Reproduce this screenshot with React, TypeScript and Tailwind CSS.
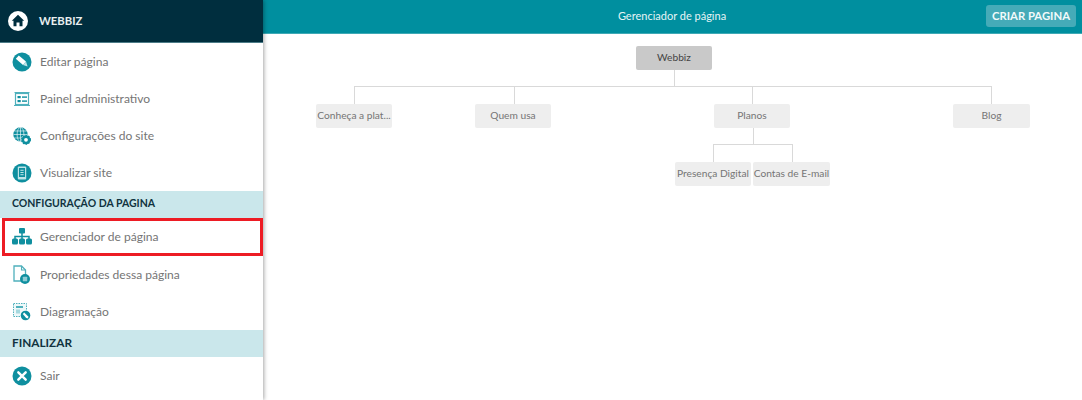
const font = { fontFamily: '"Lato", "Noto Sans", sans-serif' };

const T = "#0f8f9f";

function Home() {
  return (
    <svg width="20" height="20" viewBox="0 0 20 20">
      <circle cx="10" cy="10" r="10" fill="#fff" />
      <path d="M10 3.8 L16.2 9.8 L14.5 9.8 L14.5 15.2 L11.5 15.2 L11.5 11.5 L8.5 11.5 L8.5 15.2 L5.5 15.2 L5.5 9.8 L3.8 9.8 Z" fill="#002e3e" />
    </svg>
  );
}
function Edit() {
  return (
    <svg width="20" height="20" viewBox="0 0 20 20">
      <circle cx="10" cy="10" r="9.5" fill={T} />
      <path d="M3.8 6.8 L6.8 3.6 L14 9.6 L11 13 Z" fill="#fff" />
      <path d="M11 13 L14 9.6 L15.6 14.6 Z" fill="#bfe4e8" />
    </svg>
  );
}
function Panel() {
  return (
    <svg width="16" height="14" viewBox="0 0 16 14">
      <path d="M0.5 0.5H15.5" stroke="#4fb0bc" strokeWidth="1" />
      <rect x="1.5" y="1.5" width="13" height="11" fill="#fff" stroke="#4fb0bc" strokeWidth="1.2" />
      <rect x="3.5" y="4" width="3.2" height="2.2" fill={T} />
      <rect x="3.5" y="8" width="3.2" height="2.2" fill={T} />
      <rect x="8" y="4.4" width="5" height="1.4" fill={T} />
      <rect x="8" y="8.4" width="5" height="1.4" fill={T} />
      <path d="M0 13.5H16" stroke="#4fb0bc" strokeWidth="1" />
    </svg>
  );
}
function Globe() {
  return (
    <svg width="18" height="18" viewBox="0 0 18 18">
      <circle cx="7.5" cy="7.5" r="7.2" fill={T} />
      <g stroke="#fff" strokeWidth="0.6" fill="none">
        <ellipse cx="7.5" cy="7.5" rx="3.4" ry="7.2" />
        <path d="M7.5 0.3V14.7M1.2 4H13.8M0.4 7.5H14.6M1.2 11H13.8" />
      </g>
      <circle cx="13" cy="12.8" r="5" fill="#fff" />
      <circle cx="13" cy="12.8" r="3.2" fill="none" stroke={T} strokeWidth="2.6" />
      <circle cx="13" cy="12.8" r="4.4" fill="none" stroke={T} strokeWidth="1.2" strokeDasharray="1.6 1.2" />
    </svg>
  );
}
function Tablet() {
  return (
    <svg width="20" height="20" viewBox="0 0 20 20">
      <circle cx="10" cy="10" r="9.5" fill={T} />
      <rect x="5.8" y="3.6" width="8.4" height="12.8" rx="1" fill="#bfe4e8" />
      <rect x="7" y="5" width="6" height="9" fill={T} />
      <rect x="8.4" y="6.8" width="3.2" height="1" fill="#bfe4e8" />
      <rect x="8.4" y="9" width="3.2" height="1" fill="#bfe4e8" />
      <rect x="8.4" y="11.2" width="3.2" height="1" fill="#bfe4e8" />
    </svg>
  );
}
function Tree() {
  return (
    <svg width="20" height="17" viewBox="0 0 20 17">
      <rect x="7" y="0" width="6" height="5.5" rx="1" fill={T} />
      <path d="M10 5V8.5M3 11V8.5H17V11M10 8.5V11" stroke={T} strokeWidth="1.5" fill="none" />
      <rect x="0" y="10.5" width="6" height="6" rx="1.5" fill={T} />
      <rect x="7" y="10.5" width="6" height="6" rx="1.5" fill={T} />
      <rect x="14" y="10.5" width="6" height="6" rx="1.5" fill={T} />
    </svg>
  );
}
function PageIcon() {
  return (
    <svg width="17" height="19" viewBox="0 0 17 19">
      <path d="M1 1H8.5L12.5 5V16H1Z" fill="#fff" stroke="#4fb0bc" strokeWidth="1.3" />
      <path d="M8.5 1V5H12.5" fill="none" stroke="#4fb0bc" strokeWidth="1.1" />
      <circle cx="12" cy="14" r="5" fill={T} />
      <rect x="9.8" y="11.8" width="4.4" height="4.4" rx="0.5" fill="#8fcdd5" />
    </svg>
  );
}
function Diagram() {
  return (
    <svg width="18" height="18" viewBox="0 0 18 18">
      <rect x="0.5" y="0.5" width="13" height="13" fill="#eef8f9" stroke="#4fb0bc" strokeWidth="1" strokeDasharray="1.5 1" />
      <rect x="3" y="3" width="7" height="2" fill="#4fb0bc" />
      <rect x="3" y="6.5" width="4" height="4" fill="#a5d8de" />
      <circle cx="12.5" cy="12.5" r="5.2" fill="#fff" />
      <circle cx="12.5" cy="12.5" r="4.8" fill={T} />
      <path d="M9.8 11 L11.2 9.6 L15 13.2 L15.4 15.4 L13.2 15 Z" fill="#fff" />
    </svg>
  );
}
function Close() {
  return (
    <svg width="20" height="20" viewBox="0 0 20 20">
      <circle cx="10" cy="10" r="9.5" fill={T} />
      <path d="M6.3 6.3L13.7 13.7M13.7 6.3L6.3 13.7" stroke="#fff" strokeWidth="2.4" strokeLinecap="round" />
    </svg>
  );
}

function Item({ icon, label, h = "h-[37px]" }: { icon: React.ReactNode; label: string; h?: string }) {
  return (
    <div className={`flex items-center ${h}`}>
      <div className="flex w-[40px] shrink-0 items-center justify-center pl-[3px]">{icon}</div>
      <span className="pt-[2px] text-[12.05px] text-[#757575]">{label}</span>
    </div>
  );
}

function Section({ label, size }: { label: string; size: string }) {
  return (
    <div className={`flex h-[27px] items-center bg-[#cae7eb] pb-[2px] pl-[12px] font-bold text-[#10333f] ${size}`}>{label}</div>
  );
}

type NodeT = { label: string; x: number; y: number; w: number; root?: boolean };
const nodes: NodeT[] = [
  { label: "Webbiz", x: 636, y: 46, w: 76, root: true },
  { label: "Conheça a plat...", x: 316, y: 104, w: 76 },
  { label: "Quem usa", x: 475, y: 104, w: 76 },
  { label: "Planos", x: 714, y: 104, w: 76 },
  { label: "Blog", x: 953, y: 104, w: 77 },
  { label: "Presença Digital", x: 675, y: 162, w: 76 },
  { label: "Contas de E-mail", x: 753, y: 162, w: 77 },
];

export default function App() {
  return (
    <div className="relative flex h-[400px] w-[1082px] overflow-hidden bg-white" style={font}>
      <aside className="z-10 flex h-full w-[263px] shrink-0 flex-col bg-white shadow-[1px_0_4px_rgba(0,0,0,0.35)]">
        <div className="flex h-[43px] shrink-0 items-center gap-[11px] border-b border-[#4d7c88] bg-[#002e3e] pl-[8px]">
          <Home />
          <span className="text-[11.3px] font-bold text-[#e8eef0]">WEBBIZ</span>
        </div>
        <Item icon={<Edit />} label="Editar página" />
        <Item icon={<Panel />} label="Painel administrativo" />
        <Item icon={<Globe />} label="Configurações do site" />
        <Item icon={<Tablet />} label="Visualizar site" />
        <Section label="CONFIGURAÇÃO DA PAGINA" size="text-[10.5px]" />
        <Item icon={<Tree />} label="Gerenciador de página" />
        <Item icon={<PageIcon />} label="Propriedades dessa página" h="h-[38px]" />
        <Item icon={<Diagram />} label="Diagramação" />
        <Section label="FINALIZAR" size="text-[11.8px]" />
        <Item icon={<Close />} label="Sair" />
      </aside>

      <main className="flex min-w-0 flex-1 flex-col">
        <header className="relative flex h-[34px] shrink-0 items-center justify-center border-b border-[#3fa9b5] bg-[#008f9f]">
          <span className="mr-[1px] text-[11px] text-[#e6f4f6]">Gerenciador de página</span>
          <button className="absolute right-[6px] top-[5px] flex h-[22px] w-[90px] items-center justify-center rounded-[3px] bg-[#45abb8] text-[11.3px] font-bold text-[#f2fafb]">
            CRIAR PAGINA
          </button>
        </header>
      </main>

      <svg className="absolute left-0 top-0" width="1082" height="400">
        <g stroke="#d9d9d9" strokeWidth="1" fill="none" shapeRendering="crispEdges">
          <path d="M674.5 70V86.5M354.5 104V86.5H991.5V104M514.5 86.5V104M752.5 86.5V104" />
          <path d="M753.5 128V144.5M713.5 162V144.5H792.5V162" />
        </g>
      </svg>

      {nodes.map((n) => (
        <div
          key={n.label}
          className={`absolute flex h-[24px] items-center justify-center whitespace-nowrap rounded-[2px] text-[10.2px] ${
            n.root ? "bg-[#c9c9c9] text-[#444444]" : "bg-[#eeeeee] text-[#757575]"
          }`}
          style={{ left: n.x, top: n.y, width: n.w }}
        >
          {n.label}
        </div>
      ))}

      <div className="absolute left-[2px] top-[218px] z-20 h-[38px] w-[261px] border-[3px] border-[#ed1c24]" />
    </div>
  );
}
